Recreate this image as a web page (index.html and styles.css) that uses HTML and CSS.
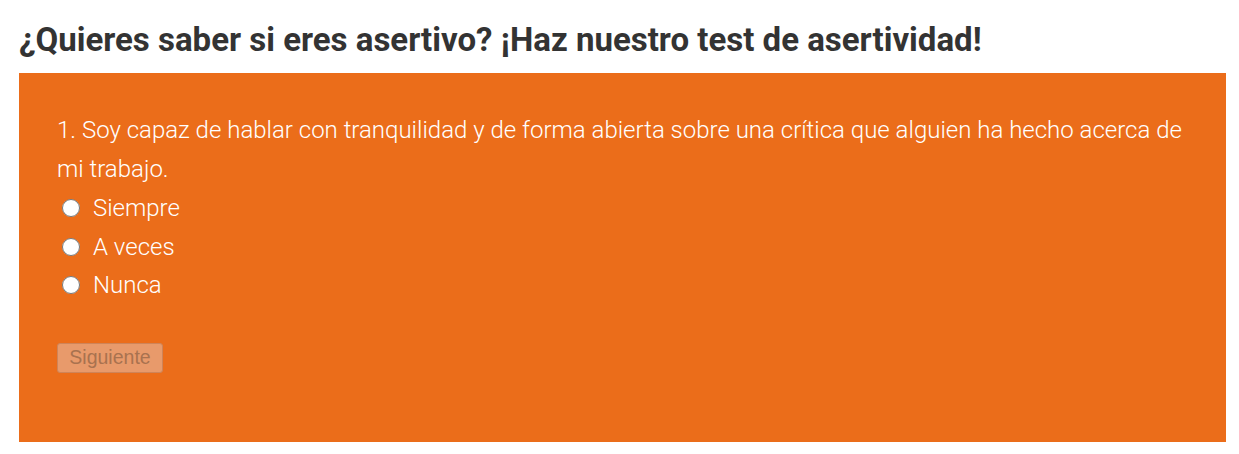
FILE: index.html
```html
<!DOCTYPE html>
<html lang="es">
<head>
<meta charset="utf-8">
<title>Test de asertividad</title>
<link rel="stylesheet" href="styles.css">
</head>
<body>
<div class="page">
  <h2 class="title">¿Quieres saber si eres asertivo? ¡Haz nuestro test de asertividad!</h2>
  <div class="quiz">
    <p class="question">1. Soy capaz de hablar con tranquilidad y de forma abierta sobre una crítica que alguien ha hecho acerca de mi trabajo.</p>
    <div class="options">
      <label class="option"><input type="radio" name="q1"><span>Siempre</span></label>
      <label class="option"><input type="radio" name="q1"><span>A veces</span></label>
      <label class="option"><input type="radio" name="q1"><span>Nunca</span></label>
    </div>
    <button class="next" disabled>Siguiente</button>
  </div>
</div>
</body>
</html>
```

FILE: styles.css
```css
html, body {
  margin: 0;
  padding: 0;
  background: #ffffff;
}
.page {
  padding: 0 19px;
  font-family: Roboto, "Liberation Sans", sans-serif;
}
.title {
  margin: 0;
  padding-top: 20px;
  height: 73px;
  box-sizing: border-box;
  font-size: 33px;
  line-height: 40px;
  font-weight: 700;
  color: #333333;
}
.quiz {
  width: 1207px;
  box-sizing: border-box;
  background: #eb6d1a;
  padding: 38px 38px 69px 38px;
  color: #ffffff;
}
.question {
  margin: 0;
  font-size: 24px;
  font-weight: 300;
  line-height: 39px;
}
.options {
  display: flex;
  flex-direction: column;
}
.option {
  display: flex;
  align-items: center;
  height: 38.5px;
  font-size: 24px;
  font-weight: 300;
}
.option input {
  margin: 0 13px 0 5px;
  width: 18px;
  height: 18px;
}
.next {
  display: block;
  margin-top: 38px;
  width: 106px;
  height: 30px;
  padding: 0;
  font-family: "Liberation Sans", Arial, sans-serif;
  font-size: 19.5px;
  color: #a9724f;
  background: #e89a6b;
  border: 1px solid #cf8458;
  border-radius: 3px;
}
```
